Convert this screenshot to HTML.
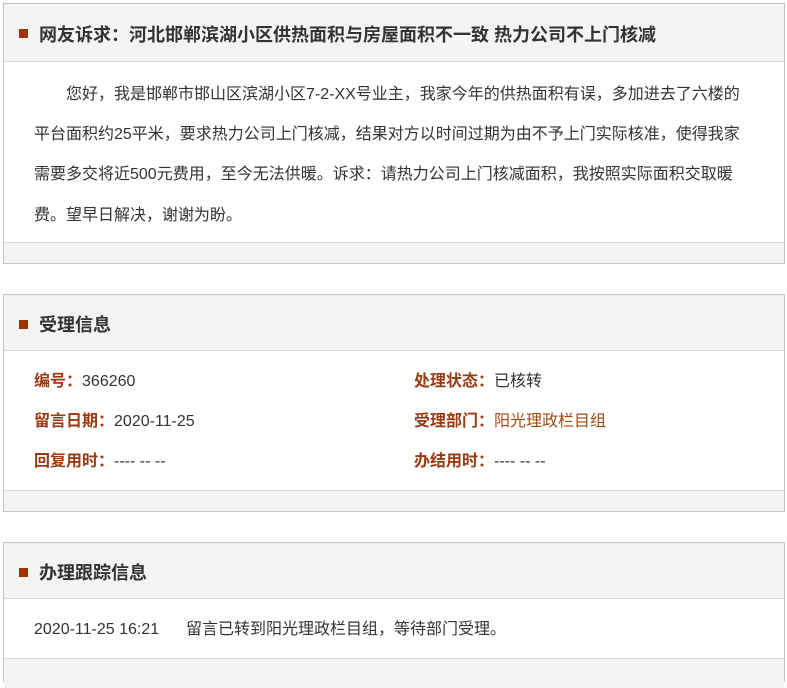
<!DOCTYPE html>
<html><head><meta charset="utf-8"><style>
*{margin:0;padding:0;box-sizing:border-box}
body{width:787px;height:665px;background:#fff;font-family:"Liberation Sans","Noto Sans CJK SC",sans-serif;color:#333;position:relative;overflow:hidden;font-size:16px}
.box{position:absolute;left:3px;width:782px;border:1px solid #c4c4c4;background:#fff}
.hd{height:58px;background:#f4f4f4;border-bottom:1px solid #d8d8d8;position:relative}
.hd i{position:absolute;left:15px;top:25px;width:9px;height:9px;background:#a23400}
.hd span{position:absolute;left:35px;top:17px;font-size:18px;font-weight:bold;color:#333;white-space:nowrap}
.ft{position:absolute;left:0;right:0;bottom:0;height:21px;background:#f4f4f4;border-top:1px solid #d8d8d8}
.t{position:absolute;white-space:nowrap;line-height:20px}
.l{color:#993a12;font-weight:bold}
</style></head><body>
<div class="box" style="top:3px;height:261px">
 <div class="hd"><i></i><span>网友诉求：河北邯郸滨湖小区供热面积与房屋面积不一致 热力公司不上门核减</span></div>
 <div class="t" style="left:62px;top:81px">您好，我是邯郸市邯山区滨湖小区7-2-XX号业主，我家今年的供热面积有误，多加进去了六楼的</div>
 <div class="t" style="left:30px;top:121px">平台面积约25平米，要求热力公司上门核减，结果对方以时间过期为由不予上门实际核准，使得我家</div>
 <div class="t" style="left:30px;top:161px">需要多交将近500元费用，至今无法供暖。诉求：请热力公司上门核减面积，我按照实际面积交取暖</div>
 <div class="t" style="left:30px;top:202px">费。望早日解决，谢谢为盼。</div>
 <div class="ft"></div>
</div>
<div class="box" style="top:294px;height:218px">
 <div class="hd" style="height:56px"><i></i><span style="top:16px">受理信息</span></div>
 <div class="t" style="left:30px;top:77px"><span class="l">编号：</span>366260</div>
 <div class="t" style="left:410px;top:77px"><span class="l">处理状态：</span>已核转</div>
 <div class="t" style="left:30px;top:117px"><span class="l">留言日期：</span>2020-11-25</div>
 <div class="t" style="left:410px;top:117px"><span class="l">受理部门：</span><span style="color:#a04a10">阳光理政栏目组</span></div>
 <div class="t" style="left:30px;top:157px"><span class="l">回复用时：</span>---- -- --</div>
 <div class="t" style="left:410px;top:157px"><span class="l">办结用时：</span>---- -- --</div>
 <div class="ft"></div>
</div>
<div class="box" style="top:542px;height:140px">
 <div class="hd" style="height:56px"><i></i><span style="top:16px">办理跟踪信息</span></div>
 <div class="t" style="left:30px;top:77px">2020-11-25 16:21</div>
 <div class="t" style="left:182px;top:77px">留言已转到阳光理政栏目组，等待部门受理。</div>
 <div style="position:absolute;left:0;right:0;top:115px;height:30px;background:#f4f4f4;border-top:1px solid #d8d8d8"></div>
</div>
</body></html>
